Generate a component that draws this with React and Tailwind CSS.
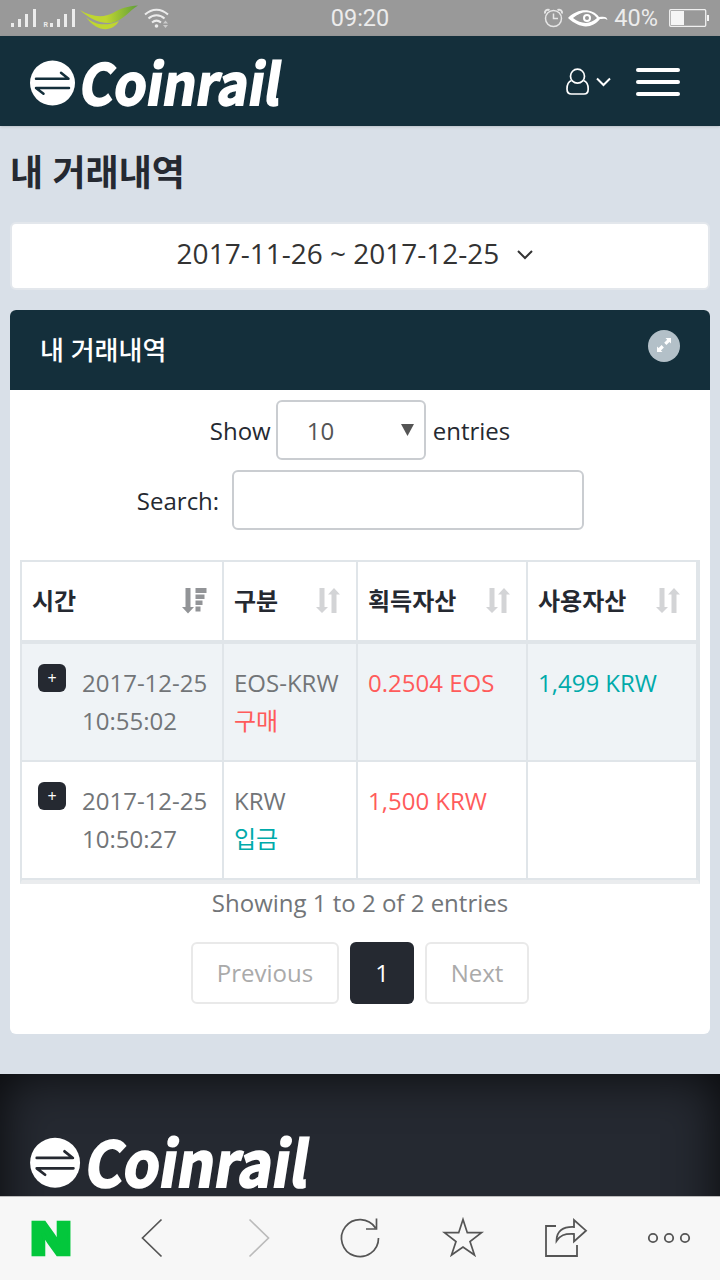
import { useState } from 'react'

const columns = [
  { key: 'time', label: '시간', sorted: true },
  { key: 'type', label: '구분' },
  { key: 'gained', label: '획득자산' },
  { key: 'used', label: '사용자산' },
]

const rows = [
  { date: '2017-12-25', time: '10:55:02', market: 'EOS-KRW', kind: '구매', kindColor: 'text-[#ff5b5b]', gained: '0.2504 EOS', used: '1,499 KRW' },
  { date: '2017-12-25', time: '10:50:27', market: 'KRW', kind: '입금', kindColor: 'text-[#00aaaa]', gained: '1,500 KRW', used: '' },
]

function StatusBar() {
  return (
    <div className="flex h-9 items-center justify-between bg-[#999] font-['Roboto',sans-serif] text-2xl text-[#ececec]">
      <svg width="300" height="36" viewBox="0 0 300 36" fill="#ececec">
        <path d="M11 23h3v4h-3zM18 19h3v8h-3zM25 14h3v13h-3zM33 9h3v18h-3z" />
        <path d="M50 23h3v4h-3zM57 19h3v8h-3zM64 14h3v13h-3zM72 9h3v18h-3z" />
        <text x="43.5" y="27" fontSize="7" fontWeight="700">R</text>
        <defs>
          <linearGradient id="leaf" x1="0" x2="1">
            <stop offset="0.45" stopColor="#bfd630" />
            <stop offset="1" stopColor="#5f9e3a" />
          </linearGradient>
        </defs>
        <path d="M80 10C91 17 104 18 113 13C120 8.500 128 6 138 5.500C130 10 123 21 111 23C99 24 87 17 80 10Z" fill="url(#leaf)" />
        <path d="M86 17C95 26 108 26 119 21C113 32 97 33 86 17Z" fill="#bfd630" />
        <g fill="none" stroke="#ececec" strokeWidth="2">
          <path d="M145 14.500C152 8 161 8 168 14.500" />
          <path d="M148.500 18.500C153 14 160 14 164.500 18.500" />
          <path d="M152 22.500C155 20 158 20 161 22.500" />
        </g>
        <circle cx="156.500" cy="26" r="1.800" />
        <path d="M163 23.500l2.500-3 2.500 3zM163 25l2.500 3 2.500-3z" opacity="0.6" />
      </svg>
      <span className="pt-0.5 text-[23.500px]">09:20</span>
      <div className="flex w-[300px] items-center justify-end">
        <svg width="68" height="36" viewBox="542 0 68 36" fill="none" stroke="#e6e6e6">
          <circle cx="553.500" cy="18.500" r="8" strokeWidth="1.500" />
          <path d="M553.500 13.500v5h4.500" strokeWidth="1.500" />
          <path d="M545 13.500c-.5-3 2-4.500 4.500-3.500M562 13.500c.5-3-2-4.500-4.500-3.500" strokeWidth="2" />
          <path d="M568 18C578 8 592 8 599 17C605 16 607 17 607.500 20C605 18 602 19 600 19C592 29 580 29 568 18ZM573 18C582 25 591 24 597 18C590 10 582 11 573 18Z" fill="#fff" fillRule="evenodd" stroke="none" />
          <circle cx="587" cy="18" r="3" stroke="#fff" strokeWidth="2" />
        </svg>
        <span className="mr-[9px] ml-1 pt-px text-[23.500px]">40%</span>
        <svg width="53" height="36" viewBox="667 0 53 36">
          <rect x="669.700" y="9.700" width="36" height="16.600" rx="1" fill="none" stroke="#f0f0f0" strokeWidth="1.300" />
          <path d="M671 11h13v14h-13zM707 15h2v6h-2z" fill="#f5f5f5" />
        </svg>
      </div>
    </div>
  )
}

function Logo({ className, line }) {
  return (
    <svg viewBox="0 0 252 48" className={className}>
      <circle cx="22.500" cy="25" r="22.500" fill="#fff" />
      <path d="M6 20.700H38.500L31 14.700M39 30H6L13.500 35.800" fill="none" stroke={line} strokeWidth="2.500" strokeLinecap="round" strokeLinejoin="round" />
      <text
        x="48"
        y="47"
        transform="translate(7 0) skewX(-9)"
        fill="#fff"
        stroke="#fff"
        strokeWidth="1.800"
        fontSize="56"
        fontWeight="700"
        textLength="201"
        lengthAdjust="spacingAndGlyphs"
        className="font-['Noto_Sans_CJK_KR',sans-serif]"
      >
        Coinrail
      </text>
    </svg>
  )
}

function Header() {
  return (
    <header className="flex h-[90px] items-center justify-between bg-[#142f3b] pr-10 pl-[30px] shadow-sm">
      <Logo className="mt-0.5 h-12 w-[252px] overflow-visible" line="#142f3b" />
      <div className="flex items-center gap-[25px] pt-0.5 text-white">
        <svg width="46" height="28" viewBox="565 67 46 28" fill="none" stroke="currentColor" strokeWidth="1.700">
          <circle cx="577.500" cy="75.200" r="7" />
          <path d="M571.500 79.500C568.500 80.500 567 84 567 88C567 91.500 568.500 93 571.500 93H584C587 93 588.200 91.500 588.200 88C588.200 84 586.500 80.500 583.500 79.500" />
          <path d="M597 77.500l6.500 6.500 6.500-6.500" strokeWidth="2" />
        </svg>
        <div className="flex w-11 flex-col gap-2">
          <span className="h-1 rounded-full bg-white" />
          <span className="h-1 rounded-full bg-white" />
          <span className="h-1 rounded-full bg-white" />
        </div>
      </div>
    </header>
  )
}

function SortIcon({ sorted }) {
  if (sorted) {
    return (
      <svg width="25" height="26" viewBox="0 0 25 26" fill="#929497">
        <path d="M3.500 0h5v19h3.500L6 25.500 0 19h3.500zM13.500 0h11v5h-11zM13.500 6.500h9v4.500h-9zM13.500 12.500h7v4.500h-7zM13.500 18.500h5v5h-5z" />
      </svg>
    )
  }
  return (
    <svg width="25" height="26" viewBox="0 0 25 26" fill="#d3d4d6">
      <path d="M3.500 0h5v19h3.500L6 25 0 19h3.500zM18 0l6 6.500h-3.500V25h-5V6.500H12z" />
    </svg>
  )
}

function TradeTable() {
  return (
    <table className="mt-[30px] w-[680px] table-fixed border-separate border-spacing-0 border-2 border-b-4 border-[#e0e5e9] border-b-[#eaecee] text-left">
      <colgroup>
        <col className="w-[202px]" />
        <col className="w-[134px]" />
        <col className="w-[170px]" />
        <col className="w-[170px]" />
      </colgroup>
      <thead>
        <tr className="h-[82px]">
          {columns.map(col => (
            <th key={col.key} className="border-r-2 border-b-4 border-[#e0e5e9] p-0 pr-[15px] pl-2.5 font-bold text-[#252931]">
              <div className="flex items-center justify-between">
                {col.label}
                <SortIcon sorted={col.sorted} />
              </div>
            </th>
          ))}
        </tr>
      </thead>
      <tbody>
        {rows.map(row => (
          <tr key={row.time} className="h-[118px] align-top leading-[38px] odd:bg-[#eff3f6]">
            <td className="border-r-2 border-b-2 border-[#e0e5e9] p-0 pt-5 pl-4">
              <div className="flex gap-4">
                <button className="flex h-7 w-7 items-center justify-center rounded-md bg-[#252931] text-base leading-none text-white">+</button>
                <div>{row.date}<br />{row.time}</div>
              </div>
            </td>
            <td className="border-r-2 border-b-2 border-[#e0e5e9] p-0 pt-5 pl-2.5">
              {row.market}
              <div className={row.kindColor}>{row.kind}</div>
            </td>
            <td className="border-r-2 border-b-2 border-[#e0e5e9] p-0 pt-5 pl-2.5 text-[#ff5b5b]">{row.gained}</td>
            <td className="border-r-2 border-b-2 border-[#e0e5e9] p-0 pt-5 pl-2.5 text-[#00aaaa]">{row.used}</td>
          </tr>
        ))}
      </tbody>
    </table>
  )
}

function Pagination() {
  return (
    <div className="mt-[23px] flex justify-center gap-[11px]">
      <button className="h-[62px] w-[148px] rounded-md border-2 border-[#e9e9e9] text-[#aaa]">Previous</button>
      <button className="h-[62px] w-16 rounded-md bg-[#252931] text-white">1</button>
      <button className="h-[62px] w-[104px] rounded-md border-2 border-[#e9e9e9] text-[#aaa]">Next</button>
    </div>
  )
}

function HistoryCard() {
  const [query, setQuery] = useState('')

  return (
    <section className="mt-5 h-[724px] overflow-hidden rounded-md bg-white">
      <div className="flex h-20 items-center justify-between bg-[#142f3b] px-[30px]">
        <h2 className="text-[26px] font-medium text-white">내 거래내역</h2>
        <button className="mb-2 flex h-8 w-8 items-center justify-center rounded-full bg-[#b3c0c8]">
          <svg width="16" height="16" viewBox="0 0 16 16" className="mb-0.5" fill="#fff">
            <path d="M9.500 1H15v5.500l-1.600-1.600-3 3L8.200 5.700l3-3zM6.500 15H1V9.500l1.600 1.600 3-3 2.300 2.300-3 3z" />
          </svg>
        </button>
      </div>

      <div className="px-2.5 pt-2.5 text-[#727578]">
        <div className="flex h-[60px] items-center justify-center text-[#252931]">
          <span className="pt-0.5">Show</span>
          <div className="mr-[7px] ml-[5px] flex h-[60px] w-[150px] items-center justify-between rounded-md border-2 border-[#cacdd1] pr-2.5 pl-[29px] text-[#555]">
            <span className="pt-0.5">10</span>
            <svg width="13" height="12" viewBox="0 0 13 12" className="mb-px"><path d="M0 0h13L6.500 12z" fill="#555" /></svg>
          </div>
          <span className="pt-0.5">entries</span>
        </div>
        <div className="mt-2.5 flex h-[60px] items-center justify-center pl-px text-[#252931]">
          <span className="pt-0.5">Search:</span>
          <input
            value={query}
            onChange={e => setQuery(e.target.value)}
            className="ml-[13px] h-[60px] w-[352px] rounded-md border-2 border-[#cacdd1] px-3"
          />
        </div>

        <TradeTable />
        <p className="-mb-0.5 text-center leading-[37px]">Showing 1 to 2 of 2 entries</p>
        <Pagination />
      </div>
    </section>
  )
}

function BrowserBar() {
  return (
    <nav className="relative z-10 grid h-[84px] shrink-0 grid-cols-7 place-items-center border-t border-[#bbb] bg-[#f7f7f7] pb-0.5">
      <svg width="44" height="44" viewBox="0 0 44 44" className="overflow-visible">
        <text x="1.500" y="38.700" fontSize="46" fontWeight="900" fill="#03c73c" stroke="#03c73c" strokeWidth="2.500" textLength="41" lengthAdjust="spacingAndGlyphs" className="font-['Inter',sans-serif]">N</text>
      </svg>
      <svg width="44" height="44" viewBox="0 0 44 44" fill="none" stroke="#555" strokeWidth="1.700"><path d="M29.500 3.500L10.500 22l19 18.500" /></svg>
      <svg width="44" height="44" viewBox="0 0 44 44" fill="none" stroke="#bbb" strokeWidth="1.700"><path d="M14.500 3.500L33.500 22l-19 18.500" /></svg>
      <svg width="44" height="44" viewBox="0 0 44 44" fill="none" stroke="#555" strokeWidth="1.700">
        <path d="M40.500 22A18.500 18.500 0 1 1 37.500 12M38.500 2.500v10.500H28" />
      </svg>
      <svg width="44" height="44" viewBox="0 0 44 44" fill="none" stroke="#555" strokeWidth="1.700">
        <path d="M22 3.500l4.300 13.200H40.500L29 25.500l4.500 13.500L22 31 10.500 39 15 25.500 3.500 16.700H17.700z" />
      </svg>
      <svg width="44" height="44" viewBox="0 0 44 44" fill="none" stroke="#555" strokeWidth="1.800">
        <path d="M12 10H2v30h31V29" />
        <path d="M12.500 25C12.500 15 19 10.500 30 11V4l12 10.700L30 25.500V18C20 17.500 16 19.500 12.500 25Z" />
      </svg>
      <svg width="44" height="44" viewBox="0 0 44 44" fill="none" stroke="#555" strokeWidth="1.800">
        <circle cx="6" cy="22" r="4.200" />
        <circle cx="22" cy="22" r="4.200" />
        <circle cx="38" cy="22" r="4.200" />
      </svg>
    </nav>
  )
}

function App() {
  return (
    <div className="flex h-[1280px] w-[720px] flex-col overflow-hidden bg-[#d9e0e8] font-['Open_Sans','Noto_Sans_CJK_KR',sans-serif] text-2xl">
      <StatusBar />
      <Header />
      <main className="h-[948px] px-2.5">
        <h1 className="flex h-24 items-center pb-0.5 text-4xl font-bold text-[#252931]">내 거래내역</h1>
        <button className="flex h-[68px] w-full items-center justify-center gap-[17px] rounded-md border-2 border-[#e3e7ec] bg-white pr-[9px] pb-1 text-[28px] text-[#333]">
          2017-11-26 ~ 2017-12-25
          <svg width="18" height="10" viewBox="0 0 18 10" fill="none" stroke="currentColor" strokeWidth="2" className="mt-0.5"><path d="M2 1l7 7 7-7" /></svg>
        </button>
        <HistoryCard />
      </main>
      {/* the footer runs on below the browser bar */}
      <footer className="h-[122px] shrink-0">
        <div className="h-[206px] bg-[#252931] pt-[61px] pl-[30px] shadow-[inset_0_0_50px_rgba(0,0,0,0.8)]">
          <Logo className="h-[53.300px] w-[280px] overflow-visible" line="#252931" />
        </div>
      </footer>
      <BrowserBar />
    </div>
  )
}

export default App
